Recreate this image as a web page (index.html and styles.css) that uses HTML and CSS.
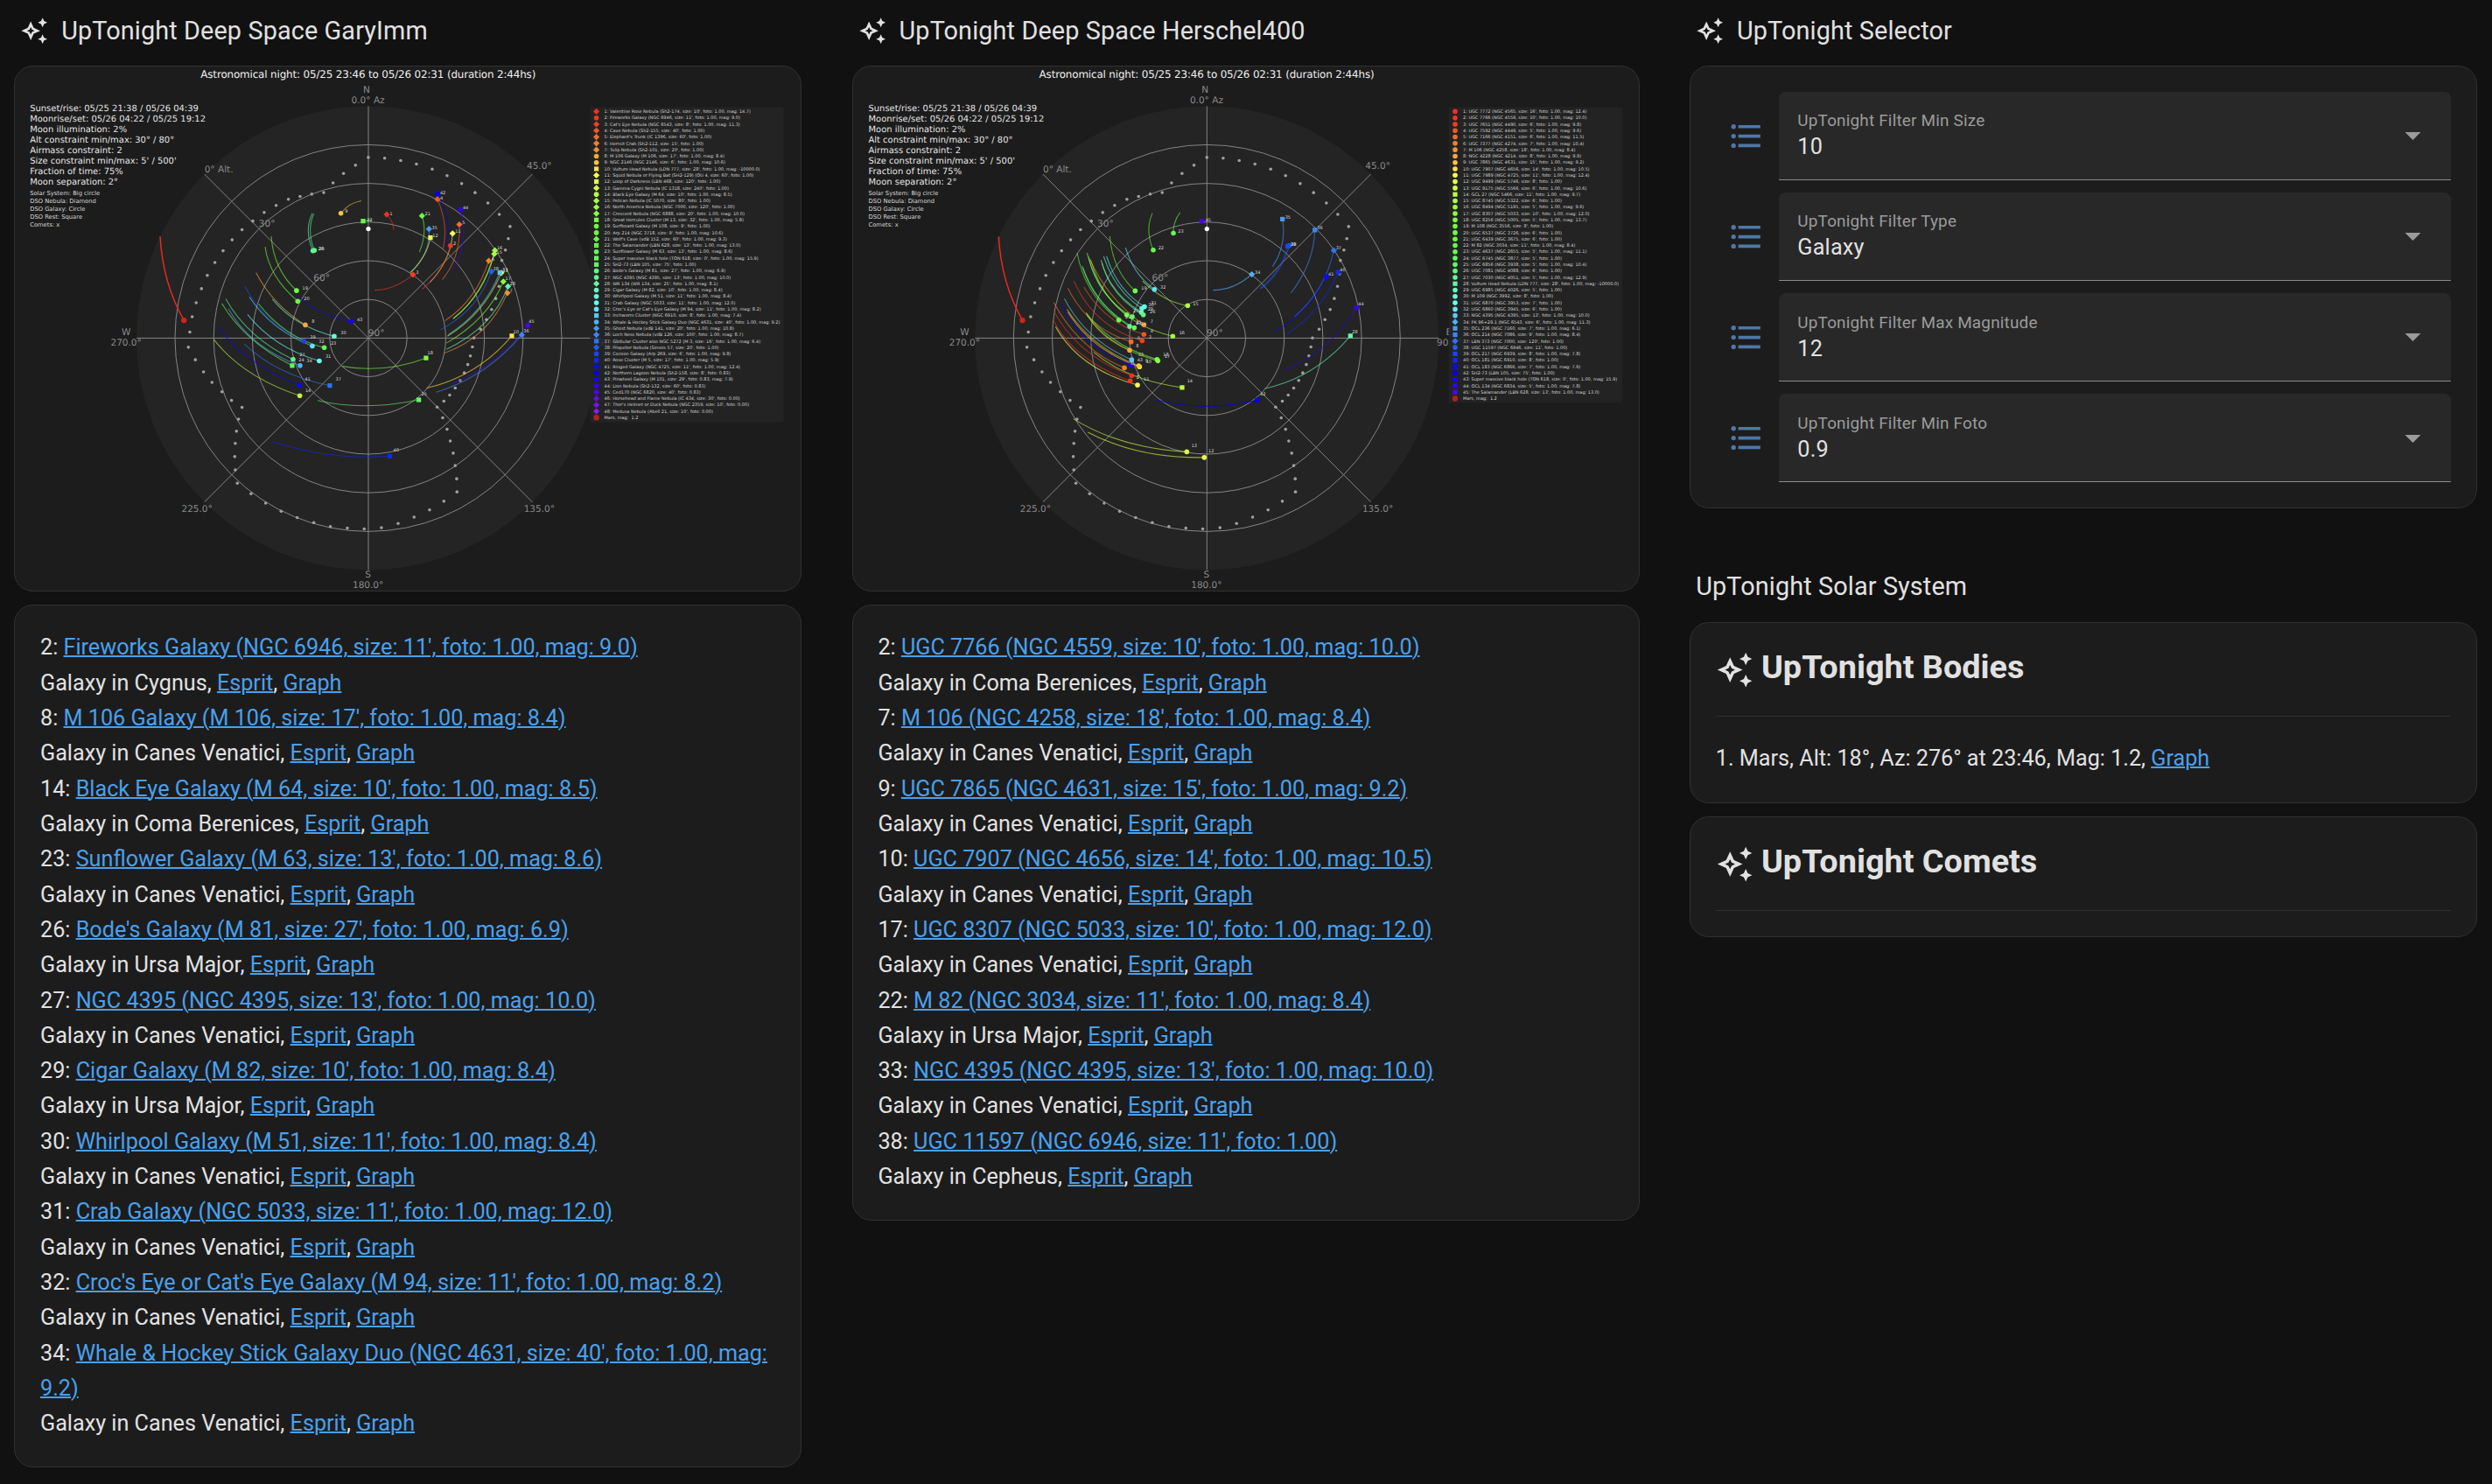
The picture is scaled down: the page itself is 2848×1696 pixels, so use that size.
FILE: index.html
```html
<!DOCTYPE html>
<html lang="en">
<head>
<meta charset="utf-8">
<title>UpTonight</title>
<link rel="stylesheet" href="styles.css">
</head>
<body>
<svg class="defs" width="0" height="0" aria-hidden="true">
  <symbol id="sparkle" viewBox="0 0 24 24"><path fill="currentColor" d="M9 4L11.5 9.5L17 12L11.5 14.5L9 20L6.5 14.5L1 12L6.5 9.5L9 4M9 8.83L8 11L5.83 12L8 13L9 15.17L10 13L12.17 12L10 11L9 8.83M19 9L17.74 6.26L15 5L17.74 3.75L19 1L20.25 3.75L23 5L20.25 6.26L19 9M19 23L17.74 20.26L15 19L17.74 17.75L19 15L20.25 17.75L23 19L20.25 20.26L19 23Z"/></symbol>
  <symbol id="list" viewBox="0 0 24 24"><path fill="currentColor" d="M7 5H21V7H7V5M7 13V11H21V13H7M4 4.5A1.5 1.5 0 0 1 5.5 6A1.5 1.5 0 0 1 4 7.5A1.5 1.5 0 0 1 2.5 6A1.5 1.5 0 0 1 4 4.5M4 10.5A1.5 1.5 0 0 1 5.5 12A1.5 1.5 0 0 1 4 13.5A1.5 1.5 0 0 1 2.5 12A1.5 1.5 0 0 1 4 10.5M7 19V17H21V19H7M4 16.5A1.5 1.5 0 0 1 5.5 18A1.5 1.5 0 0 1 4 19.5A1.5 1.5 0 0 1 2.5 18A1.5 1.5 0 0 1 4 16.5Z"/></symbol>
  <symbol id="caret" viewBox="0 0 24 24"><path fill="currentColor" d="M7 10L12 15L17 10Z"/></symbol>
</svg>
<main class="board">
  <section class="column">
    <header class="heading"><svg class="heading-icon"><use href="#sparkle"/></svg><span>UpTonight Deep Space GaryImm</span></header>
    <div class="card plot"><svg id="plot-gary" class="sky" viewBox="17.4 76 898 598.7"></svg></div>
    <div class="card objects">
      <p>2: <a href="#">Fireworks Galaxy (NGC 6946, size: 11', foto: 1.00, mag: 9.0)</a><br>Galaxy in Cygnus, <a href="#">Esprit</a>, <a href="#">Graph</a></p>
      <p>8: <a href="#">M 106 Galaxy (M 106, size: 17', foto: 1.00, mag: 8.4)</a><br>Galaxy in Canes Venatici, <a href="#">Esprit</a>, <a href="#">Graph</a></p>
      <p>14: <a href="#">Black Eye Galaxy (M 64, size: 10', foto: 1.00, mag: 8.5)</a><br>Galaxy in Coma Berenices, <a href="#">Esprit</a>, <a href="#">Graph</a></p>
      <p>23: <a href="#">Sunflower Galaxy (M 63, size: 13', foto: 1.00, mag: 8.6)</a><br>Galaxy in Canes Venatici, <a href="#">Esprit</a>, <a href="#">Graph</a></p>
      <p>26: <a href="#">Bode's Galaxy (M 81, size: 27', foto: 1.00, mag: 6.9)</a><br>Galaxy in Ursa Major, <a href="#">Esprit</a>, <a href="#">Graph</a></p>
      <p>27: <a href="#">NGC 4395 (NGC 4395, size: 13', foto: 1.00, mag: 10.0)</a><br>Galaxy in Canes Venatici, <a href="#">Esprit</a>, <a href="#">Graph</a></p>
      <p>29: <a href="#">Cigar Galaxy (M 82, size: 10', foto: 1.00, mag: 8.4)</a><br>Galaxy in Ursa Major, <a href="#">Esprit</a>, <a href="#">Graph</a></p>
      <p>30: <a href="#">Whirlpool Galaxy (M 51, size: 11', foto: 1.00, mag: 8.4)</a><br>Galaxy in Canes Venatici, <a href="#">Esprit</a>, <a href="#">Graph</a></p>
      <p>31: <a href="#">Crab Galaxy (NGC 5033, size: 11', foto: 1.00, mag: 12.0)</a><br>Galaxy in Canes Venatici, <a href="#">Esprit</a>, <a href="#">Graph</a></p>
      <p>32: <a href="#">Croc's Eye or Cat's Eye Galaxy (M 94, size: 11', foto: 1.00, mag: 8.2)</a><br>Galaxy in Canes Venatici, <a href="#">Esprit</a>, <a href="#">Graph</a></p>
      <p>34: <a href="#">Whale &amp; Hockey Stick Galaxy Duo (NGC 4631, size: 40', foto: 1.00, mag: 9.2)</a><br>Galaxy in Canes Venatici, <a href="#">Esprit</a>, <a href="#">Graph</a></p>
    </div>
  </section>

  <section class="column">
    <header class="heading"><svg class="heading-icon"><use href="#sparkle"/></svg><span>UpTonight Deep Space Herschel400</span></header>
    <div class="card plot"><svg id="plot-herschel" class="sky" viewBox="975 76 898 598.7"></svg></div>
    <div class="card objects">
      <p>2: <a href="#">UGC 7766 (NGC 4559, size: 10', foto: 1.00, mag: 10.0)</a><br>Galaxy in Coma Berenices, <a href="#">Esprit</a>, <a href="#">Graph</a></p>
      <p>7: <a href="#">M 106 (NGC 4258, size: 18', foto: 1.00, mag: 8.4)</a><br>Galaxy in Canes Venatici, <a href="#">Esprit</a>, <a href="#">Graph</a></p>
      <p>9: <a href="#">UGC 7865 (NGC 4631, size: 15', foto: 1.00, mag: 9.2)</a><br>Galaxy in Canes Venatici, <a href="#">Esprit</a>, <a href="#">Graph</a></p>
      <p>10: <a href="#">UGC 7907 (NGC 4656, size: 14', foto: 1.00, mag: 10.5)</a><br>Galaxy in Canes Venatici, <a href="#">Esprit</a>, <a href="#">Graph</a></p>
      <p>17: <a href="#">UGC 8307 (NGC 5033, size: 10', foto: 1.00, mag: 12.0)</a><br>Galaxy in Canes Venatici, <a href="#">Esprit</a>, <a href="#">Graph</a></p>
      <p>22: <a href="#">M 82 (NGC 3034, size: 11', foto: 1.00, mag: 8.4)</a><br>Galaxy in Ursa Major, <a href="#">Esprit</a>, <a href="#">Graph</a></p>
      <p>33: <a href="#">NGC 4395 (NGC 4395, size: 13', foto: 1.00, mag: 10.0)</a><br>Galaxy in Canes Venatici, <a href="#">Esprit</a>, <a href="#">Graph</a></p>
      <p>38: <a href="#">UGC 11597 (NGC 6946, size: 11', foto: 1.00)</a><br>Galaxy in Cepheus, <a href="#">Esprit</a>, <a href="#">Graph</a></p>
    </div>
  </section>

  <section class="column">
    <header class="heading"><svg class="heading-icon"><use href="#sparkle"/></svg><span>UpTonight Selector</span></header>
    <div class="card filters">
      <div class="filter"><svg class="filter-icon"><use href="#list"/></svg><div class="select"><div class="select-text"><span class="label">UpTonight Filter Min Size</span><span class="value">10</span></div><svg class="caret"><use href="#caret"/></svg></div></div>
      <div class="filter"><svg class="filter-icon"><use href="#list"/></svg><div class="select"><div class="select-text"><span class="label">UpTonight Filter Type</span><span class="value">Galaxy</span></div><svg class="caret"><use href="#caret"/></svg></div></div>
      <div class="filter"><svg class="filter-icon"><use href="#list"/></svg><div class="select"><div class="select-text"><span class="label">UpTonight Filter Max Magnitude</span><span class="value">12</span></div><svg class="caret"><use href="#caret"/></svg></div></div>
      <div class="filter"><svg class="filter-icon"><use href="#list"/></svg><div class="select"><div class="select-text"><span class="label">UpTonight Filter Min Foto</span><span class="value">0.9</span></div><svg class="caret"><use href="#caret"/></svg></div></div>
    </div>
    <h2 class="subheading">UpTonight Solar System</h2>
    <div class="card body-card">
      <h3 class="body-title"><svg class="body-icon"><use href="#sparkle"/></svg><span>UpTonight Bodies</span></h3>
      <p class="body-row">1. Mars, Alt: 18°, Az: 276° at 23:46, Mag: 1.2, <a href="#">Graph</a></p>
    </div>
    <div class="card body-card">
      <h3 class="body-title"><svg class="body-icon"><use href="#sparkle"/></svg><span>UpTonight Comets</span></h3>
    </div>
  </section>
</main>
<script src="plots.js"></script>
</body>
</html>
```
FILE: styles.css
```css
* { box-sizing: border-box; }
body { margin: 0; background: #111; color: #e1e1e1; font-family: Roboto, sans-serif; font-size: 25.2px; line-height: 40.32px; }
a { color: #4aa0ec; text-decoration: underline; text-decoration-thickness: 2px; }
p, h2, h3 { margin: 0; }
.defs { position: absolute; }
.board { display: flex; align-items: flex-start; gap: 57.4px; height: 1696px; padding-left: 16.2px; overflow: hidden; }
.column { flex: none; width: 900px; display: flex; flex-direction: column; }
.heading { display: flex; align-items: center; gap: 14.4px; height: 75px; padding: 0 7.2px 4px; font-size: 28.8px; letter-spacing: 0.13px; }
.heading-icon { width: 32.4px; height: 32.4px; }
.card { background: #1c1c1c; border: 1px solid #313131; border-radius: 21.6px; }
.plot { overflow: hidden; margin-bottom: 14.9px; }
.sky { display: block; width: 100%; aspect-ratio: 898 / 598.7; font-family: "DejaVu Sans", sans-serif; text-rendering: geometricPrecision; }
.objects { padding: 28.8px; }

.filters { display: flex; flex-direction: column; gap: 14.4px; padding: 28.8px; }
.filter { display: flex; align-items: center; height: 100.8px; }
.filter-icon { flex: none; width: 43.2px; height: 43.2px; margin: 0 15.2px 0 13.6px; color: #4d78a8; }
.select { flex: 1; height: 100%; display: flex; align-items: center; justify-content: space-between; padding: 0 21.6px; background: #282828; border-bottom: 1px solid #8a8a8a; border-radius: 7.2px 7.2px 0 0; }
.select-text { display: flex; flex-direction: column; }
.label { font-size: 18.9px; line-height: 26px; color: #9b9b9b; letter-spacing: 0.2px; }
.value { line-height: 33px; letter-spacing: 0.2px; }
.caret { width: 43.2px; height: 43.2px; color: #9b9b9b; }

.subheading { padding: 0 7.2px; margin: 69px 0 21px; font-size: 28.8px; font-weight: 400; line-height: 40px; letter-spacing: 0.13px; }
.body-card { padding: 28.8px 28.8px 29.6px; margin-bottom: 14.6px; }
.body-title { display: flex; gap: 9px; height: 78px; border-bottom: 1px solid #2f2f2f; font-size: 37.8px; font-weight: 700; line-height: 42px; }
.body-icon { width: 43.2px; height: 43.2px; margin-top: 3px; }
.body-row { padding-top: 28.6px; }

.night { font-size: 11.9px; fill: #eee; }
.facts { font-size: 9.95px; fill: #e4e4e4; }
.notes { font-size: 6.75px; fill: #d8d8d8; }
.tick { font-size: 10.5px; fill: #8a8a8a; text-anchor: middle; }
.legend { font-size: 4.97px; fill: #d5d5d5; }
.tag { font-size: 4.97px; fill: #ddd; }
.grid { fill: none; stroke: #858585; stroke-width: 1; }
.track { fill: none; stroke-width: 1.1; opacity: 0.6; }
```
FILE: plots.js
```js
// Sky plots. Each frame maps plotted coordinates to the viewBox: [x offset, x scale, y offset, y scale].
const NS = 'http://www.w3.org/2000/svg';
const WEST1 = [0, 3, 0, 2.24], EAST1 = [420, 3, 60, 2.529];
const WEST2 = [970, 3, 60, 2.489], EAST2 = [1400, 3, 60, 2.489];
const at = (f, x, y) => [f[0] + x / f[1], f[2] + y / f[3]];

const STOPS = [[1, 240, 48, 32], [3, 240, 64, 32], [5, 240, 110, 45], [7, 242, 145, 50], [9, 250, 195, 60], [11, 255, 255, 80], [14, 190, 255, 70], [18, 120, 255, 64], [22, 100, 255, 70], [25, 96, 250, 105], [28, 100, 245, 170], [31, 102, 255, 245], [33, 90, 200, 250], [35, 70, 155, 248], [37, 45, 115, 245], [39, 25, 70, 245], [41, 4, 10, 250], [42, 0, 0, 250], [45, 75, 5, 240], [48, 140, 25, 245]];
function hue(i) {
  for (let k = 1; k < STOPS.length; k++) {
    const a = STOPS[k - 1], b = STOPS[k];
    if (i <= b[0]) {
      const t = (i - a[0]) / (b[0] - a[0]);
      return 'rgb(' + [1, 2, 3].map(c => Math.round(a[c] + (b[c] - a[c]) * t)).join(',') + ')';
    }
  }
}

function add(svg, tag, attrs, text) {
  const e = document.createElementNS(NS, tag);
  for (const k in attrs) e.setAttribute(k, attrs[k]);
  if (text !== undefined) e.textContent = text;
  svg.appendChild(e);
}

function mark(svg, x, y, kind, fill) {
  if (kind === 's') add(svg, 'rect', { x: x - 2.6, y: y - 2.6, width: 5.2, height: 5.2, fill });
  else if (kind === 'd') add(svg, 'path', { d: `M${x} ${y - 3.6}L${x + 3.6} ${y}L${x} ${y + 3.6}L${x - 3.6} ${y}Z`, fill });
  else add(svg, 'circle', { cx: x, cy: y, r: 2.8, fill });
}

const DOTS_W = [[1264,403],[1320,405],[1375,411],[1429,420],[1220,423],[1179,444],[1143,468],[1111,493],[1070,497],[1030,503],[990,510],[948,526],[907,544],[868,566],[831,588],[797,614],[766,642],[738,672],[712,705],[692,739],[674,775],[660,811],[652,850],[647,889],[671,921],[699,952],[728,979],[762,1003],[795,1025],[831,1043],[819,1073],[812,1104],[808,1135],[806,1169],[808,1203],[815,1237],[862,1264],[912,1288],[965,1309],[1020,1325],[1077,1338],[1134,1348],[1192,1352],[1250,1354],[1309,1351],[1366,1340],[1421,1324]];
const DOTS_E = [[223,337],[274,356],[324,379],[370,405],[414,435],[453,468],[490,503],[484,538],[474,571],[462,601],[459,640],[452,676],[441,711],[427,743],[409,772],[389,800],[366,825],[361,851],[354,877],[345,902],[333,926],[319,948],[302,970],[283,990],[263,1008],[240,1025],[259,1056],[274,1089],[285,1123],[295,1158],[302,1194],[307,1232],[308,1270],[263,1297],[214,1322]];

// [number, frame, kind, x, y, control x, control y, end x, end y, (label x, label y)]
const GARY = [
  [1,WEST1,'d',1327,549,1346,560,1351,588,1338,547],[9,WEST1,'c',1170,546,1195,520,1240,514,1184,542],[22,WEST1,'s',1246,566,1260,563,1275,563,1259,563],
  [29,WEST1,'c',1074,642,1043,590,1072,546,1094,637],[26,WEST1,'c',1079,641,1052,590,1077,547,1092,637],
  [19,WEST1,'c',1018,744,940,690,931,605,1038,739],[20,WEST1,'c',1022,771,925,710,910,632,1043,766],[43,WEST1,'c',1205,823,1090,805,1018,757,1225,818],
  [8,WEST1,'c',1048,832,935,780,879,698,1070,823],[30,WEST1,'c',1147,861,1010,835,935,766,1169,852],[39,WEST1,'c',1043,873,905,825,841,733,1064,863],
  [32,WEST1,'c',1072,886,930,845,856,760,1094,875],[23,WEST1,'c',1113,890,980,865,888,778,1135,879],[31,WEST1,'c',1096,924,940,890,850,805,1117,913],
  [27,WEST1,'c',1006,920,850,865,775,765,1028,908],[34,WEST1,'c',1030,936,860,890,784,790,1052,924],[24,WEST1,'s',1003,936,840,875,762,777,1025,923],
  [37,WEST1,'s',1132,987,950,960,838,880,1152,972],[41,WEST1,'c',1027,986,850,935,747,838,1046,972],[14,WEST1,'c',1029,1013,835,965,734,869,1048,1000],
  [40,WEST1,'s',1338,1168,1120,1178,936,1130,1350,1152],
  [25,EAST1,'s',177,1004,-10,1037,-170,1006,186,988],[18,EAST1,'s',202,883,60,928,-85,907,207,870],
  [3,EAST1,'d',157,642,95,686,25,687,167,637],[21,EAST1,'d',188,472,207,520,179,577,198,468],[35,EAST1,'d',212,510,217,580,152,634,222,507],[12,EAST1,'s',217,535,205,590,148,636,224,530],
  [42,EAST1,'d',241,409,292,480,272,557,250,405],[4,EAST1,'d',241,424,280,500,260,568,250,421],[44,EAST1,'d',320,454,350,550,295,628,328,449],
  [5,EAST1,'d',316,497,322,590,258,656,326,493],[11,EAST1,'d',293,523,287,600,215,665,302,518],[2,EAST1,'c',286,558,265,630,189,684,295,553],
  [15,EAST1,'d',436,582,400,700,297,768,444,579],[16,EAST1,'d',438,572,400,700,294,770,445,566],[6,EAST1,'d',417,602,375,715,267,775,427,599],[38,EAST1,'d',426,633,380,745,252,801,432,626],
  [13,EAST1,'d',460,637,400,757,275,820,464,632],[33,EAST1,'s',455,636,400,750,278,816,463,630],[17,EAST1,'d',467,662,415,770,272,840,474,655],
  [28,EAST1,'d',483,676,430,795,272,858,489,670],[7,EAST1,'d',481,695,415,825,264,869,489,690],[10,EAST1,'s',496,819,380,935,204,970,501,808],
  [45,EAST1,'d',551,789,450,905,290,957,554,779],[36,EAST1,'d',530,816,410,937,236,982,536,806]
];
const HERSCHEL = [
  [22,WEST2,'c',1044,562,1015,505,1041,457,1061,557],[23,WEST2,'c',1113,514,1112,480,1136,455,1129,510],[45,WEST2,'s',1210,480,1225,478,1240,478,1223,476],
  [19,WEST2,'c',982,678,905,620,895,523,1003,670],[32,WEST2,'c',1048,674,975,630,949,555,1068,668],[15,WEST2,'c',1162,720,1080,710,1007,650,1180,716],
  [31,WEST2,'c',1014,723,920,675,884,580,1036,714],[30,WEST2,'c',1005,728,910,675,874,580,1027,719],[29,WEST2,'c',1003,739,895,685,865,590,1025,731],[26,WEST2,'c',1010,746,900,695,868,598,1032,738],
  [20,WEST2,'c',953,746,850,680,817,570,975,737],[21,WEST2,'c',926,761,810,690,783,570,948,752],[25,WEST2,'c',972,752,850,690,822,580,985,768],
  [27,WEST2,'c',963,779,840,715,800,607,985,770],[24,WEST2,'c',979,783,850,725,803,612,1001,774],[16,WEST2,'c',1111,807,890,765,829,590,1133,798],
  [7,WEST2,'c',1012,775,885,700,826,586,1034,766],[4,WEST2,'c',1012,802,880,770,806,667,1034,792],[3,WEST2,'c',1006,820,840,780,772,650,1028,810],[5,WEST2,'c',968,823,820,785,751,670,990,812],
  [8,WEST2,'c',963,847,860,812,815,742,985,835],[18,WEST2,'c',1057,873,900,835,813,740,1078,861],[17,WEST2,'c',1060,877,900,843,817,748,1082,864],
  [33,WEST2,'c',970,874,815,820,739,700,992,861],[10,WEST2,'c',997,894,830,845,751,738,1019,881],[9,WEST2,'c',994,891,830,838,748,730,1016,878],[43,WEST2,'s',967,889,800,840,727,715,989,876],
  [6,WEST2,'c',945,897,790,845,703,711,967,886],[1,WEST2,'c',970,919,790,865,706,740,987,918],[2,WEST2,'c',965,934,770,875,700,760,986,925],[11,WEST2,'c',990,946,790,900,709,780,1011,931],
  [14,WEST2,'s',1143,953,950,930,840,853,1160,936],[12,WEST2,'c',1219,1152,990,1155,820,1080,1233,1134],[13,WEST2,'c',1159,1136,930,1125,770,1042,1175,1118],
  [42,EAST2,'s',111,989,-70,1024,-235,989,120,971],[34,EAST2,'d',92,631,30,676,-41,676,102,627],[35,EAST2,'s',197,474,212,550,163,609,206,470],
  [38,EAST2,'c',221,549,190,632,122,672,226,546],[39,EAST2,'s',215,551,190,625,119,671,224,546],[36,EAST2,'s',308,505,305,600,226,684,316,500],[37,EAST2,'d',373,563,345,675,238,752,380,557],
  [41,EAST2,'s',348,638,290,740,168,795,354,632],[40,EAST2,'s',388,625,325,745,207,803,394,619],[44,EAST2,'s',451,726,360,850,203,904,457,717],[28,EAST2,'s',430,806,310,925,137,956,436,796]
];

const LEGEND_GARY = `dValentine Rose Nebula (Sh2-174, size: 10', foto: 1.00, mag: 14.7)
cFireworks Galaxy (NGC 6946, size: 11', foto: 1.00, mag: 9.0)
dCat's Eye Nebula (NGC 6543, size: 8', foto: 1.00, mag: 11.3)
dCave Nebula (Sh2-155, size: 40', foto: 1.00)
dElephant's Trunk (IC 1396, size: 60', foto: 1.00)
dHermit Crab (Sh2-112, size: 15', foto: 1.00)
dTulip Nebula (Sh2-101, size: 20', foto: 1.00)
cM 106 Galaxy (M 106, size: 17', foto: 1.00, mag: 8.4)
cNGC 2146 (NGC 2146, size: 6', foto: 1.00, mag: 10.6)
sVulture Head Nebula (LDN 777, size: 28', foto: 1.00, mag: -10000.0)
dSquid Nebula or Flying Bat (SH2-129) (OU 4, size: 60', foto: 1.00)
sLoop of Darkness (LBN 468, size: 120', foto: 1.00)
dGamma Cygni Nebula (IC 1318, size: 240', foto: 1.00)
cBlack Eye Galaxy (M 64, size: 10', foto: 1.00, mag: 8.5)
dPelican Nebula (IC 5070, size: 80', foto: 1.00)
dNorth America Nebula (NGC 7000, size: 120', foto: 1.00)
dCrescent Nebula (NGC 6888, size: 20', foto: 1.00, mag: 10.0)
sGreat Hercules Cluster (M 13, size: 32', foto: 1.00, mag: 5.8)
cSurfboard Galaxy (M 108, size: 9', foto: 1.00)
cArp 214 (NGC 3718, size: 9', foto: 1.00, mag: 10.6)
dWolf's Cave (vdB 152, size: 60', foto: 1.00, mag: 9.3)
sThe Salamander (LBN 628, size: 13', foto: 1.00, mag: 13.0)
cSunflower Galaxy (M 63, size: 13', foto: 1.00, mag: 8.6)
sSuper massive black hole (TON 618, size: 0', foto: 1.00, mag: 15.9)
sSH2-73 (LBN 105, size: 75', foto: 1.00)
cBode's Galaxy (M 81, size: 27', foto: 1.00, mag: 6.9)
cNGC 4395 (NGC 4395, size: 13', foto: 1.00, mag: 10.0)
dWR 134 (WR 134, size: 25', foto: 1.00, mag: 8.1)
cCigar Galaxy (M 82, size: 10', foto: 1.00, mag: 8.4)
cWhirlpool Galaxy (M 51, size: 11', foto: 1.00, mag: 8.4)
cCrab Galaxy (NGC 5033, size: 11', foto: 1.00, mag: 12.0)
cCroc's Eye or Cat's Eye Galaxy (M 94, size: 11', foto: 1.00, mag: 8.2)
sInchworm Cluster (NGC 6910, size: 8', foto: 1.00, mag: 7.4)
cWhale & Hockey Stick Galaxy Duo (NGC 4631, size: 40', foto: 1.00, mag: 9.2)
dGhost Nebula (vdB 141, size: 20', foto: 1.00, mag: 10.8)
dLoch Ness Nebula (vdB 126, size: 100', foto: 1.00, mag: 8.7)
sGlobular Cluster also NGC 5272 (M 3, size: 16', foto: 1.00, mag: 6.4)
dPropeller Nebula (Simeis 57, size: 20', foto: 1.00)
cCocoon Galaxy (Arp 269, size: 6', foto: 1.00, mag: 9.8)
sRose Cluster (M 5, size: 17', foto: 1.00, mag: 5.9)
cRinged Galaxy (NGC 4725, size: 11', foto: 1.00, mag: 12.4)
dNorthern Lagoon Nebula (Sh2-158, size: 8', foto: 0.83)
cPinwheel Galaxy (M 101, size: 29', foto: 0.83, mag: 7.9)
dLion Nebula (Sh2-132, size: 60', foto: 0.83)
dCed170 (NGC 6820, size: 40', foto: 0.83)
dHorsehead and Flame Nebula (IC 434, size: 30', foto: 0.00)
dThor's Helmet or Duck Nebula (NGC 2359, size: 10', foto: 0.00)
dMedusa Nebula (Abell 21, size: 10', foto: 0.00)`.split('\n');
const LEGEND_HERSCHEL = `cUGC 7772 (NGC 4565, size: 16', foto: 1.00, mag: 12.4)
cUGC 7766 (NGC 4559, size: 10', foto: 1.00, mag: 10.0)
cUGC 7651 (NGC 4490, size: 6', foto: 1.00, mag: 9.8)
cUGC 7592 (NGC 4449, size: 5', foto: 1.00, mag: 9.6)
cUGC 7166 (NGC 4151, size: 6', foto: 1.00, mag: 11.5)
cUGC 7377 (NGC 4274, size: 7', foto: 1.00, mag: 10.4)
cM 106 (NGC 4258, size: 18', foto: 1.00, mag: 8.4)
cNGC 4228 (NGC 4214, size: 8', foto: 1.00, mag: 9.9)
cUGC 7865 (NGC 4631, size: 15', foto: 1.00, mag: 9.2)
cUGC 7907 (NGC 4656, size: 14', foto: 1.00, mag: 10.5)
cUGC 7989 (NGC 4725, size: 11', foto: 1.00, mag: 12.4)
cUGC 9499 (NGC 5746, size: 8', foto: 1.00)
cUGC 9175 (NGC 5566, size: 6', foto: 1.00, mag: 10.6)
sGCL 27 (NGC 5466, size: 11', foto: 1.00, mag: 9.7)
cUGC 8745 (NGC 5322, size: 6', foto: 1.00)
cUGC 8494 (NGC 5195, size: 5', foto: 1.00, mag: 9.6)
cUGC 8307 (NGC 5033, size: 10', foto: 1.00, mag: 12.0)
cUGC 8256 (NGC 5005, size: 5', foto: 1.00, mag: 13.7)
cM 108 (NGC 3556, size: 8', foto: 1.00)
cUGC 6537 (NGC 3726, size: 6', foto: 1.00)
cUGC 6439 (NGC 3675, size: 6', foto: 1.00)
cM 82 (NGC 3034, size: 11', foto: 1.00, mag: 8.4)
cUGC 4637 (NGC 2655, size: 5', foto: 1.00, mag: 11.1)
cUGC 6745 (NGC 3877, size: 5', foto: 1.00)
cUGC 6856 (NGC 3938, size: 5', foto: 1.00, mag: 10.4)
cUGC 7081 (NGC 4088, size: 6', foto: 1.00)
cUGC 7030 (NGC 4051, size: 5', foto: 1.00, mag: 12.9)
sVulture Head Nebula (LDN 777, size: 28', foto: 1.00, mag: -10000.0)
cUGC 6985 (NGC 4026, size: 5', foto: 1.00)
cM 109 (NGC 3992, size: 8', foto: 1.00)
cUGC 6870 (NGC 3953, size: 7', foto: 1.00)
cUGC 6860 (NGC 3945, size: 6', foto: 1.00)
cNGC 4395 (NGC 4395, size: 13', foto: 1.00, mag: 10.0)
dPK 96+29.1 (NGC 6543, size: 6', foto: 1.00, mag: 11.3)
sOCL 236 (NGC 7160, size: 7', foto: 1.00, mag: 6.1)
sOCL 214 (NGC 7086, size: 9', foto: 1.00, mag: 8.4)
dLBN 373 (NGC 7000, size: 120', foto: 1.00)
cUGC 11597 (NGC 6946, size: 11', foto: 1.00)
sOCL 217 (NGC 6939, size: 8', foto: 1.00, mag: 7.8)
sOCL 181 (NGC 6910, size: 8', foto: 1.00)
sOCL 183 (NGC 6866, size: 7', foto: 1.00, mag: 7.6)
sSH2-73 (LBN 105, size: 75', foto: 1.00)
sSuper massive black hole (TON 618, size: 0', foto: 1.00, mag: 15.9)
sOCL 134 (NGC 6834, size: 5', foto: 1.00, mag: 7.8)
sThe Salamander (LBN 628, size: 13', foto: 1.00, mag: 13.0)`.split('\n');

function draw(id, dx, objects, legend, box, gx) {
  const svg = document.getElementById(id);
  const cx = 421.4 + dx, cy = 386.4, R = 265;
  add(svg, 'circle', { cx, cy, r: R, fill: '#242424' });
  for (let i = 1; i < 6; i++) add(svg, 'circle', { cx, cy, r: 44.2 * i, class: 'grid' });
  const q = R * Math.SQRT1_2;
  add(svg, 'path', { class: 'grid', d: `M${cx} ${cy - R}V${cy + R}M${cx - R} ${cy}H${cx + R}M${cx - q} ${cy - q}L${cx + q} ${cy + q}M${cx - q} ${cy + q}L${cx + q} ${cy - q}` });

  const tick = (x, y, t) => add(svg, 'text', { x: x + dx, y, class: 'tick' }, t);
  tick(419.4, 106.3, 'N'); tick(421, 118.3, '0.0° Az'); tick(421, 659.6, 'S'); tick(421, 672, '180.0°');
  tick(144.5, 383, 'W'); tick(144.5, 395.3, '270.0°'); tick(698, 383, 'E'); tick(698.5, 395.3, '90.0°');
  tick(250.5, 196.6, '0° Alt.'); tick(225.5, 584.6, '225.0°'); tick(616.7, 193.5, '45.0°'); tick(616.7, 585, '135.0°');
  tick(305.5, 258.8, '30°'); tick(368, 321.3, '60°'); tick(430.5, 383.8, '90°');

  add(svg, 'text', { x: 229.7 + dx, y: 89.4, class: 'night', textLength: 383 }, 'Astronomical night: 05/25 23:46 to 05/26 02:31 (duration 2:44hs)');
  ['Sunset/rise: 05/25 21:38 / 05/26 04:39', 'Moonrise/set: 05/26 04:22 / 05/25 19:12', 'Moon illumination: 2%', 'Alt constraint min/max: 30° / 80°', 'Airmass constraint: 2', "Size constraint min/max: 5' / 500'", 'Fraction of time: 75%', 'Moon separation: 2°']
    .forEach((t, i) => add(svg, 'text', { x: 34.6 + dx, y: 126.8 + i * 12, class: 'facts' }, t));
  ['Solar System: Big circle', 'DSO Nebula: Diamond', 'DSO Galaxy: Circle', 'DSO Rest: Square', 'Comets: x']
    .forEach((t, i) => add(svg, 'text', { x: 34.6 + dx, y: 222.8 + i * 8.97, class: 'notes' }, t));

  const dot = (f, p) => { const [x, y] = at(f, p[0], p[1]); add(svg, 'circle', { cx: x + dx, cy: y, r: 1.8, fill: '#a0a0a0' }); };
  DOTS_W.forEach(p => dot(WEST1, p));
  DOTS_E.forEach(p => dot(EAST1, p));
  add(svg, 'circle', { cx: 421.4 + dx, cy: 261.6, r: 2.6, fill: '#fff' });

  objects.forEach(o => {
    const a = at(o[1], o[3], o[4]), c = at(o[1], o[5], o[6]), b = at(o[1], o[7], o[8]);
    add(svg, 'path', { d: `M${a}Q${c} ${b}`, class: 'track', stroke: hue(o[0]) });
  });
  objects.forEach(o => { const a = at(o[1], o[3], o[4]); mark(svg, a[0], a[1], o[2], hue(o[0])); });
  objects.forEach(o => { const l = at(o[1], o[9], o[10]); add(svg, 'text', { x: l[0], y: l[1] + 1.4, class: 'tag' }, o[0]); });

  add(svg, 'path', { d: `M${183.4 + dx} 270.3Q${186.5 + dx} 324 ${210.6 + dx} 366`, fill: 'none', stroke: '#ea2a1c', 'stroke-width': 1.5 });
  add(svg, 'circle', { cx: 210.6 + dx, cy: 366.1, r: 3.2, fill: '#d0241a' });

  add(svg, 'rect', { x: box[0], y: box[1], width: box[2], height: box[3], rx: 1, fill: '#242424', opacity: 0.85 });
  legend.forEach((row, i) => {
    const y = 127.4 + i * 7.29;
    mark(svg, gx, y, row[0], hue(i + 1));
    add(svg, 'text', { x: gx + 9, y: y + 1.7, class: 'legend' }, `${i + 1}: ${row.slice(1)}`);
  });
  const y = 127.4 + legend.length * 7.29;
  add(svg, 'circle', { cx: gx, cy: y, r: 3.2, fill: '#b0241a' });
  add(svg, 'text', { x: gx + 9, y: y + 1.7, class: 'legend' }, 'Mars, mag:\u00a0 1.2');
}

draw('plot-gary', 0, GARY, LEGEND_GARY, [675, 122.6, 221, 360], 682);
draw('plot-herschel', 957.9, HERSCHEL, LEGEND_HERSCHEL, [1655.7, 122.6, 198.3, 337.6], 1663);
```
